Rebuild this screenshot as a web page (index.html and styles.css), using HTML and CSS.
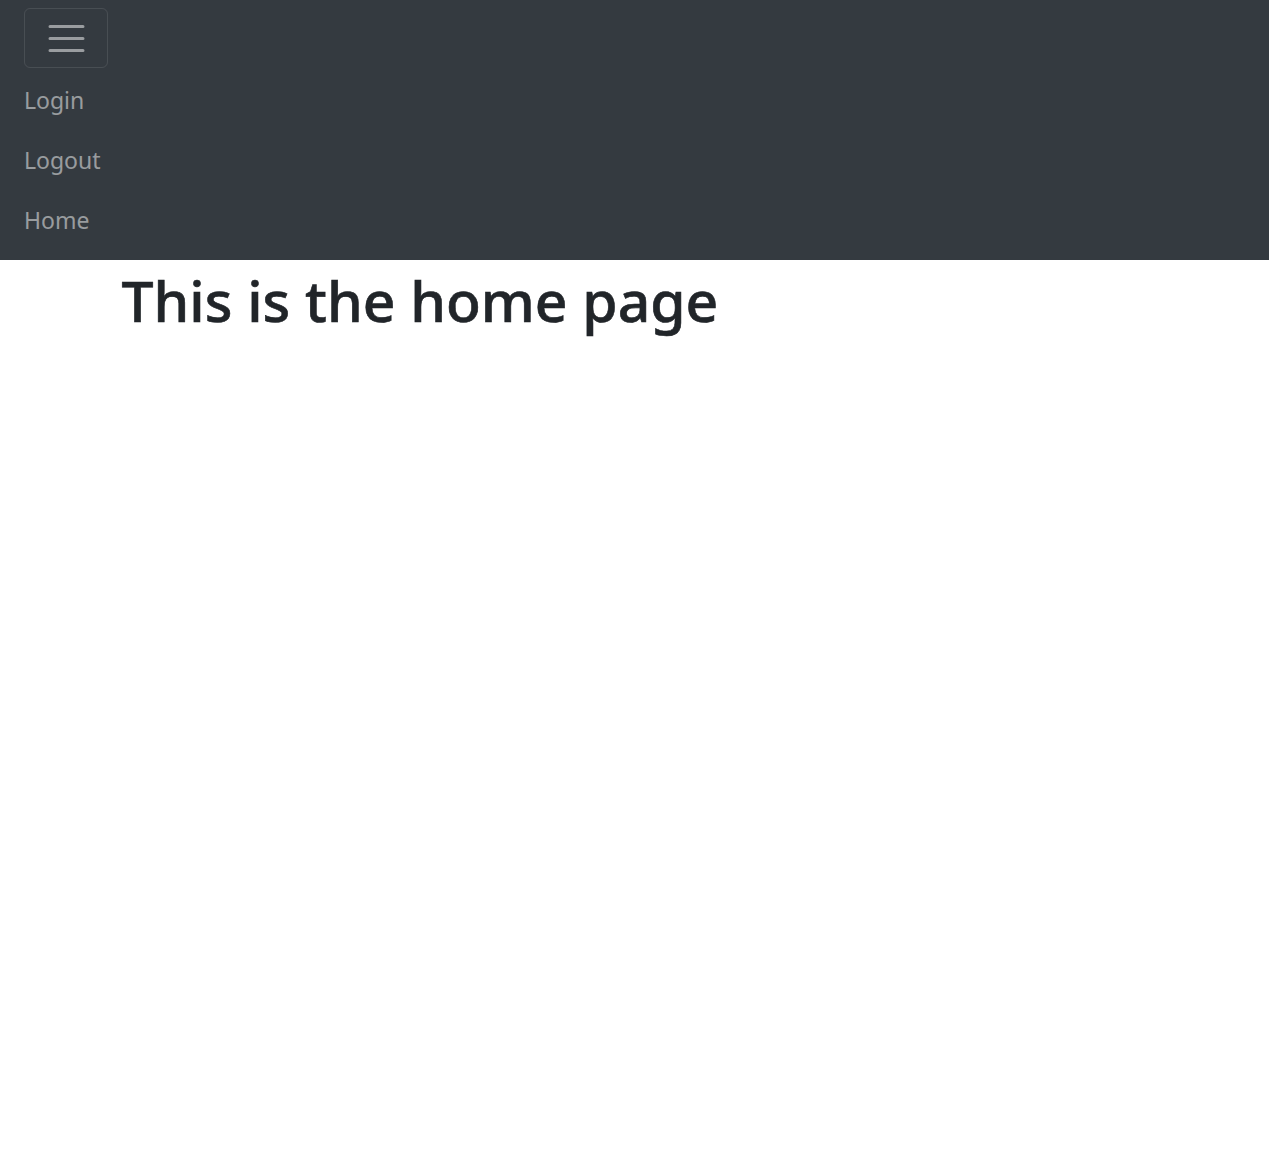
FILE: index.html
```html
<!DOCTYPE html>
<html lang="en">
<head>
<meta charset="utf-8">
<title>Home</title>
<link rel="stylesheet" href="styles.css">
</head>
<body>
<nav class="navbar">
  <button class="toggler" type="button" aria-label="Toggle navigation">
    <svg class="toggler-icon" viewBox="0 0 30 30" width="45" height="45">
      <path d="M4 7h22M4 15h22M4 23h22" stroke="rgba(255,255,255,0.5)" stroke-width="2" stroke-linecap="round" fill="none"/>
    </svg>
  </button>
  <ul class="nav-list">
    <li><a class="nav-link" href="#">Login</a></li>
    <li><a class="nav-link" href="#">Logout</a></li>
    <li><a class="nav-link" href="#">Home</a></li>
  </ul>
</nav>
<main class="container">
  <h1 class="title">This is the home page</h1>
</main>
</body>
</html>
```

FILE: styles.css
```css
html, body {
  margin: 0;
  padding: 0;
  background: #fff;
}
body {
  font-family: "Noto Sans", "Open Sans", sans-serif;
  color: #212529;
}
.navbar {
  background: #343a40;
  padding: 8px 24px 10px;
  display: flex;
  flex-direction: column;
  align-items: flex-start;
}
.toggler {
  width: 84px;
  height: 60px;
  box-sizing: border-box;
  background: transparent;
  border: 1.5px solid rgba(255,255,255,0.1);
  border-radius: 6px;
  padding: 0;
  display: flex;
  align-items: center;
  justify-content: center;
  margin: 0 0 2px;
}
.toggler-icon {
  display: block;
}
.nav-list {
  list-style: none;
  margin: 0;
  padding: 0;
  display: flex;
  flex-direction: column;
}
.nav-link {
  display: block;
  padding: 12px 0;
  font-size: 23px;
  line-height: 36px;
  color: rgba(255,255,255,0.5);
  text-decoration: none;
}
.container {
  box-sizing: border-box;
  max-width: 1080px;
  margin: 0 auto;
  padding: 0 22.5px 0 27px;
}
.title {
  margin: 0 0 12px;
  font-size: 57px;
  font-weight: 500;
  line-height: 80px;
  color: #212529;
  -webkit-text-stroke: 0.6px #212529;
}
```
